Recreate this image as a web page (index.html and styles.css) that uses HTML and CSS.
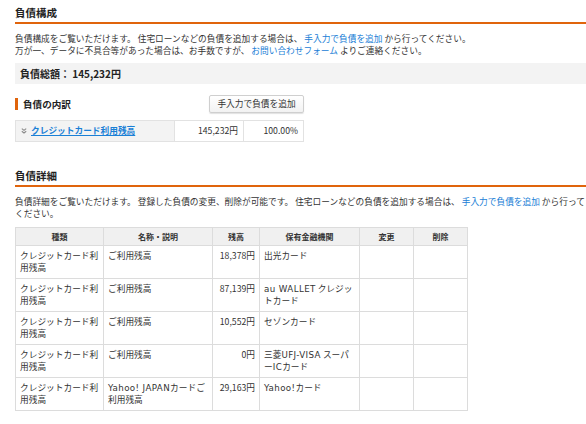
FILE: index.html
```html
<!DOCTYPE html>
<html lang="ja">
<head>
<meta charset="utf-8">
<link rel="stylesheet" href="styles.css">
</head>
<body>
<div class="page">
  <section class="sec">
    <h2 class="h2">負債構成</h2>
    <p class="desc">負債構成をご覧いただけます。 住宅ローンなどの負債を追加する場合は、 <a class="lnk" href="#">手入力で負債を追加</a> から行ってください。<br>万が一、データに不具合等があった場合は、お手数ですが、 <a class="lnk" href="#">お問い合わせフォーム</a> よりご連絡ください。</p>
    <div class="total">負債総額： 145,232円</div>
    <div class="sub-head">
      <h3 class="h3">負債の内訳</h3>
      <button class="btn">手入力で負債を追加</button>
    </div>
    <table class="breakdown">
      <tr>
        <td class="bd-name"><svg class="chev" width="6" height="6" viewBox="0 0 6 6"><path d="M0.8 0.6 L3 2.4 L5.2 0.6 M0.8 3.2 L3 5 L5.2 3.2" fill="none" stroke="#8a8a8a" stroke-width="1.1"/></svg><a class="bd-link" href="#">クレジットカード利用残高</a></td>
        <td class="bd-amt">145,232円</td>
        <td class="bd-pct">100.00%</td>
      </tr>
    </table>
  </section>
  <section class="sec sec2">
    <h2 class="h2">負債詳細</h2>
    <p class="desc">負債詳細をご覧いただけます。 登録した負債の変更、削除が可能です。 住宅ローンなどの負債を追加する場合は、 <a class="lnk" href="#">手入力で負債を追加</a> から行ってください。</p>
    <table class="detail">
      <colgroup>
        <col class="c1"><col class="c2"><col class="c3"><col class="c4"><col class="c5"><col class="c6">
      </colgroup>
      <thead>
        <tr><th>種類</th><th>名称・説明</th><th>残高</th><th>保有金融機関</th><th>変更</th><th>削除</th></tr>
      </thead>
      <tbody>
        <tr><td>クレジットカード利用残高</td><td>ご利用残高</td><td class="num">18,378円</td><td class="inst">出光カード</td><td></td><td></td></tr>
        <tr><td>クレジットカード利用残高</td><td>ご利用残高</td><td class="num">87,139円</td><td class="inst"><span class="en">au WALLET</span> クレジットカード</td><td></td><td></td></tr>
        <tr><td>クレジットカード利用残高</td><td>ご利用残高</td><td class="num">10,552円</td><td class="inst">セゾンカード</td><td></td><td></td></tr>
        <tr><td>クレジットカード利用残高</td><td>ご利用残高</td><td class="num">0円</td><td class="inst">三菱<span class="en">UFJ-VISA</span> スーパー<span class="en">IC</span>カード</td><td></td><td></td></tr>
        <tr><td>クレジットカード利用残高</td><td><span class="en">Yahoo! JAPAN</span>カードご利用残高</td><td class="num">29,163円</td><td class="inst"><span class="en">Yahoo!</span>カード</td><td></td><td></td></tr>
      </tbody>
    </table>
  </section>
</div>
</body>
</html>
```
FILE: styles.css
```css
html, body {
  margin: 0;
  padding: 0;
  background: #fff;
  overflow: hidden;
}
body {
  font-family: "Noto Sans CJK JP", "Noto Sans", sans-serif;
  color: #333;
  font-size: 8.7px;
  line-height: 12px;
}
.page {
  width: 575px;
  padding: 6px 0 0 15px;
}
.h2 {
  margin: 0 -20px 0 0;
  font-size: 10.5px;
  font-weight: bold;
  line-height: 14px;
  padding-bottom: 2px;
  border-bottom: 2px solid #e0640c;
  color: #222;
}
.desc {
  margin: 9px 0 0 0;
}
.lnk {
  color: #1a80d6;
  text-decoration: none;
}
.en {
  font-family: "DejaVu Sans", sans-serif;
  letter-spacing: 0.4px;
}
.total {
  margin: 6px -20px 0 0;
  background: #f3f3f3;
  height: 21px;
  line-height: 21px;
  padding-left: 5px;
  font-size: 10px;
  font-weight: bold;
  color: #222;
}
.sub-head {
  width: 289px;
  display: flex;
  justify-content: space-between;
  align-items: center;
  margin-top: 11px;
}
.h3 {
  margin: 0;
  font-size: 9.6px;
  font-weight: bold;
  line-height: 12px;
  border-left: 3px solid #e0640c;
  padding-left: 5px;
  color: #222;
}
.btn {
  font-family: inherit;
  font-size: 8.7px;
  line-height: 12px;
  color: #333;
  height: 18px;
  width: 95px;
  padding: 0;
  border: 1px solid #cfcfcf;
  border-radius: 2px;
  background: linear-gradient(#ffffff, #f2f2f2);
  box-shadow: 0 1px 1px rgba(0,0,0,0.12);
}
.breakdown {
  margin-top: 7px;
  width: 289px;
  border-collapse: collapse;
  table-layout: fixed;
}
.breakdown td {
  border: 1px solid #e2e2e2;
  height: 20px;
  padding: 0 5px;
}
.bd-name {
  width: 148px;
  background: #f3f3f3;
}
.bd-amt {
  width: 58px;
  text-align: right;
}
.bd-pct {
  text-align: right;
}
.chev {
  margin-right: 4px;
  vertical-align: 0;
}
.bd-link {
  color: #1a80d6;
  font-weight: bold;
  text-decoration: underline;
}
.sec2 {
  margin-top: 27px;
}
.detail {
  margin-top: 7px;
  width: 453px;
  border-collapse: collapse;
  table-layout: fixed;
}
.c1 { width: 88px; }
.c2 { width: 109px; }
.c3 { width: 47px; }
.c4 { width: 100px; }
.c5 { width: 54px; }
.c6 { width: 54px; }
.detail th {
  background: #f0f0f0;
  border: 1px solid #dcdcdc;
  font-weight: bold;
  font-size: 8px;
  height: 17px;
  padding: 0;
  color: #333;
}
.detail td {
  border: 1px solid #dcdcdc;
  height: 32px;
  padding: 4px 4px;
  vertical-align: top;
  box-sizing: border-box;
  line-break: loose;
}
.detail td.inst {
  padding-right: 6px;
}
.detail td.num {
  text-align: right;
}
```
